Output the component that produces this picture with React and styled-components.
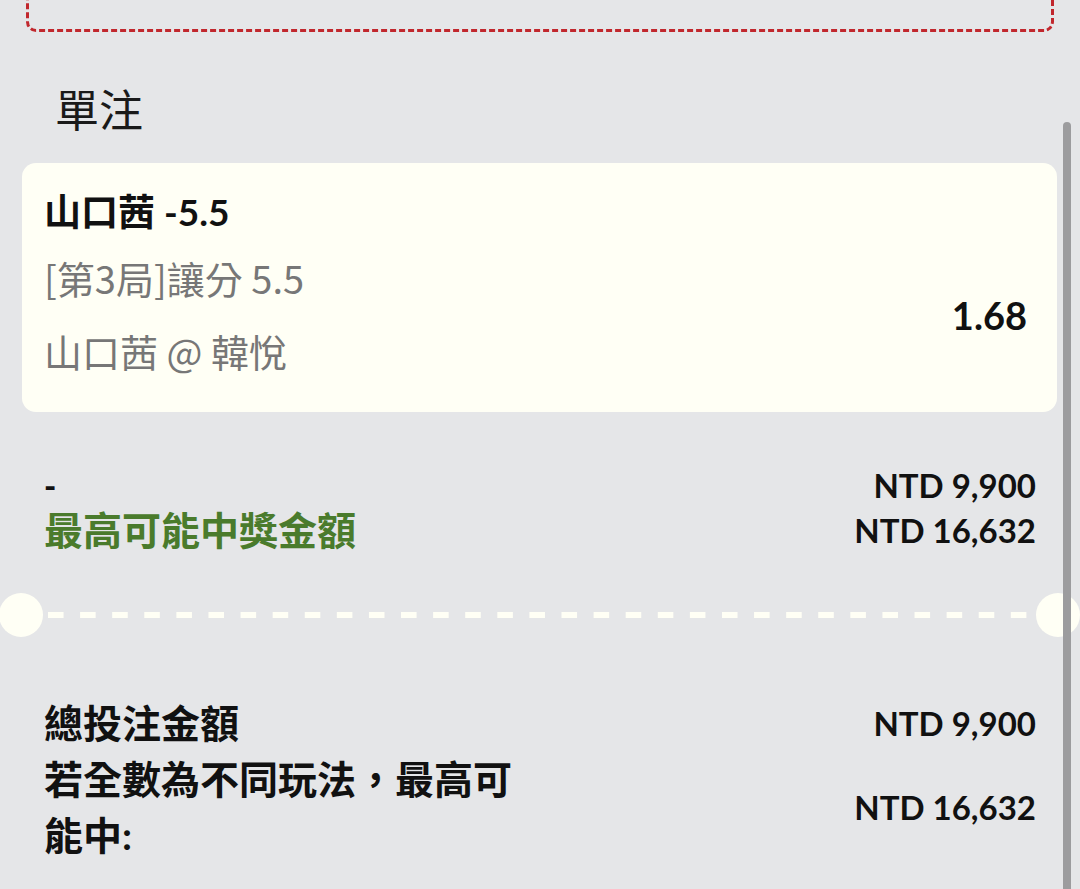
import React from "react";
import styled, { createGlobalStyle } from "styled-components";

const GlobalStyle = createGlobalStyle`
  html, body {
    margin: 0;
    padding: 0;
    background: #e5e6e8;
  }
  body {
    font-family: Lato, "Noto Sans CJK TC", sans-serif;
    color: #111;
  }
`;

const Page = styled.div`
  position: relative;
  width: 1080px;
  height: 889px;
  overflow: hidden;
  background: #e5e6e8;
`;

const DashedBox = styled.div`
  box-sizing: border-box;
  height: 82px;
  margin: -50px 26px 0;
  border: 3px dashed #c1272d;
  border-radius: 10px;
`;

const SectionTitle = styled.h2`
  margin: 54px 0 0 55px;
  font-family: "Noto Sans CJK TC", sans-serif;
  font-weight: 400;
  font-size: 44px;
  line-height: 44px;
  color: #1a1a1a;
`;

const Card = styled.div`
  margin: 33px 23px 0 22px;
  padding: 25px 30px 37px 22px;
  background: #fffff5;
  border-radius: 14px;
`;

const BetTitle = styled.div`
  font-family: Lato, "Noto Sans CJK TC", sans-serif;
  font-weight: 700;
  font-size: 37px;
  line-height: 48px;
  color: #111;
`;

const DetailRow = styled.div`
  display: flex;
  align-items: center;
  justify-content: space-between;
  margin-top: 18px;
`;

const DetailCol = styled.div`
  display: flex;
  flex-direction: column;
  gap: 25px;
`;

const DetailLine = styled.div`
  font-family: "Noto Sans CJK TC", sans-serif;
  font-weight: 400;
  font-size: 38px;
  line-height: 48px;
  color: #777;
`;

const Odds = styled.div`
  font-family: Lato, sans-serif;
  font-weight: 700;
  font-size: 38px;
  line-height: 48px;
  color: #111;
`;

const SummaryGrid = styled.div`
  display: grid;
  grid-template-columns: 1fr auto;
  align-items: center;
  margin-top: ${(p) => p.$top}px;
  padding: 0 44px;
`;

const Dash = styled.div`
  font-family: Lato, sans-serif;
  font-weight: 900;
  font-size: 33px;
  line-height: 45px;
`;

const Label = styled.div`
  max-width: 482px;
  font-family: Lato, "Noto Sans CJK TC", sans-serif;
  font-weight: 700;
  font-size: 39px;
  line-height: ${(p) => p.$lh}px;
  color: ${(p) => (p.$green ? "#4a7b2c" : "#111")};
`;

const Amount = styled.div`
  text-align: right;
  font-family: Lato, sans-serif;
  font-weight: 700;
  font-size: 33px;
  line-height: 45px;
  color: #111;
`;

const Separator = styled.div`
  display: flex;
  align-items: center;
  height: 44px;
  margin-top: 40px;
`;

const Notch = styled.div`
  flex: none;
  width: 44px;
  height: 44px;
  border-radius: 50%;
  background: #fffff5;
  margin-left: ${(p) => (p.$left ? "-1px" : "0")};
`;

const DashLine = styled.div`
  flex: 1;
  height: 6px;
  margin: 0 6px 0 5px;
  background-image: linear-gradient(
    to right,
    #fffff5 0,
    #fffff5 50%,
    transparent 50%,
    transparent 100%
  );
  background-size: 32.1px 6px;
  background-repeat: repeat-x;
`;

const ScrollThumb = styled.div`
  position: absolute;
  top: 122px;
  right: 9px;
  bottom: -10px;
  width: 8px;
  border-radius: 4px;
  background: #9c9c9e;
`;

export default function App() {
  return (
    <>
      <GlobalStyle />
      <Page>
        <DashedBox />
        <SectionTitle>單注</SectionTitle>
        <Card>
          <BetTitle>山口茜 -5.5</BetTitle>
          <DetailRow>
            <DetailCol>
              <DetailLine>[第3局]讓分 5.5</DetailLine>
              <DetailLine>山口茜 @ 韓悅</DetailLine>
            </DetailCol>
            <Odds>1.68</Odds>
          </DetailRow>
        </Card>

        <SummaryGrid $top={51}>
          <Dash>-</Dash>
          <Amount>NTD 9,900</Amount>
          <Label $green $lh={45}>最高可能中獎金額</Label>
          <Amount>NTD 16,632</Amount>
        </SummaryGrid>

        <Separator>
          <Notch $left />
          <DashLine />
          <Notch />
        </Separator>

        <SummaryGrid $top={58}>
          <Label $lh={56}>總投注金額</Label>
          <Amount>NTD 9,900</Amount>
          <Label $lh={56}>若全數為不同玩法，最高可能中:</Label>
          <Amount>NTD 16,632</Amount>
        </SummaryGrid>

        <ScrollThumb />
      </Page>
    </>
  );
}
